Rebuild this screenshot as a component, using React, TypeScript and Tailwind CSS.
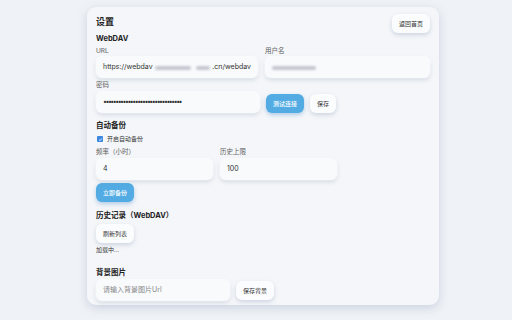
import React from 'react';

const font = { fontFamily: '"Inter", "Noto Sans CJK SC", sans-serif' };

const inputCls =
  'h-[21px] rounded-[6px] bg-[#f8fafc] px-[7px] flex items-center text-[7px] text-[#333] shadow-[0_2px_4px_rgba(150,165,190,0.35),0_0_0_1px_rgba(255,255,255,0.9)] overflow-hidden whitespace-nowrap';

const btnCls =
  'h-[19px] rounded-[6px] bg-[#fbfcfd] px-[7px] flex items-center text-[6px] text-[#333] shadow-[0_2px_4px_rgba(150,165,190,0.4)]';

const blueBtnCls =
  'h-[19px] rounded-[6px] bg-[#52abe2] px-[7px] flex items-center text-[6px] text-white font-medium shadow-[0_2px_4px_rgba(74,140,200,0.4)]';

const Label = ({ children }: { children: React.ReactNode }) => (
  <div className="text-[6.5px] leading-none text-[#606060] mb-[3px]">{children}</div>
);

const Section = ({ children }: { children: React.ReactNode }) => (
  <div className="text-[7.5px] leading-none font-bold text-[#222]">{children}</div>
);

const Blur = ({ w }: { w: string }) => (
  <span className={'inline-block h-[4px] rounded-full bg-[#c4c8ce] blur-[1px] ' + w} />
);

export default function App() {
  return (
    <div className="w-[512px] h-[320px] bg-[#eff2f6] overflow-hidden" style={font}>
      <div className="ml-[87px] mt-[7px] w-[352px] h-[298px] rounded-[9px] bg-[#f4f6f9] shadow-[0_3px_10px_rgba(140,155,185,0.35)] px-[9px] pt-[7px]">
        <div className="flex items-start justify-between">
          <div className="text-[9px] font-bold text-[#222] mt-[3px] leading-none">设置</div>
          <div className={btnCls}>返回首页</div>
        </div>

        <div className="mt-[2px]">
          <Section>WebDAV</Section>
        </div>

        <div className="mt-[5px] flex gap-[7px]">
          <div className="w-[162px]">
            <Label>URL</Label>
            <div className={inputCls + ' gap-[2px]'}>
              <span>https://webdav</span>
              <Blur w="w-[48px]" />
              <Blur w="w-[18px] ml-[3px]" />
              <span>.cn/webdav</span>
            </div>
          </div>
          <div className="flex-1">
            <Label>用户名</Label>
            <div className={inputCls}>
              <Blur w="w-[44px]" />
            </div>
          </div>
        </div>

        <div className="mt-[4px]">
          <Label>密码</Label>
          <div className="flex items-end gap-[6px]">
            <div className={inputCls + ' w-[164px] tracking-[-1.5px] text-[5px]'}>
              ••••••••••••••••••••••••••••••••
            </div>
            <div className={blueBtnCls}>测试连接</div>
            <div className={btnCls}>保存</div>
          </div>
        </div>

        <div className="mt-[9px]">
          <Section>自动备份</Section>
        </div>

        <div className="mt-[7px] flex items-center gap-[4px] text-[6px] leading-none text-[#333]">
          <span className="w-[6px] h-[6px] ml-[1px] rounded-[1px] bg-[#3b86e0] flex items-center justify-center">
            <svg viewBox="0 0 10 10" className="w-[5px] h-[5px]">
              <path d="M2 5.2 L4.2 7.3 L8 2.8" stroke="white" strokeWidth="1.6" fill="none" />
            </svg>
          </span>
          <span>开启自动备份</span>
        </div>

        <div className="mt-[7px] flex gap-[7px]">
          <div className="w-[117px]">
            <Label>频率（小时）</Label>
            <div className={inputCls + ' h-[19px]'}>4</div>
          </div>
          <div className="w-[117px]">
            <Label>历史上限</Label>
            <div className={inputCls + ' h-[19px]'}>100</div>
          </div>
        </div>

        <div className={blueBtnCls + ' w-fit mt-[3px]'}>立即备份</div>

        <div className="mt-[10px]">
          <Section>历史记录（WebDAV）</Section>
        </div>

        <div className={btnCls + ' w-fit mt-[5px]'}>刷新列表</div>

        <div className="mt-[4px] text-[6px] text-[#333] leading-none">加载中...</div>

        <div className="mt-[16px]">
          <Section>背景图片</Section>
        </div>

        <div className="mt-[3px] flex items-center gap-[6px]">
          <div className={inputCls + ' w-[134px] h-[20px] text-[#888]'}>请输入背景图片Url</div>
          <div className={btnCls}>保存背景</div>
        </div>
      </div>
    </div>
  );
}
